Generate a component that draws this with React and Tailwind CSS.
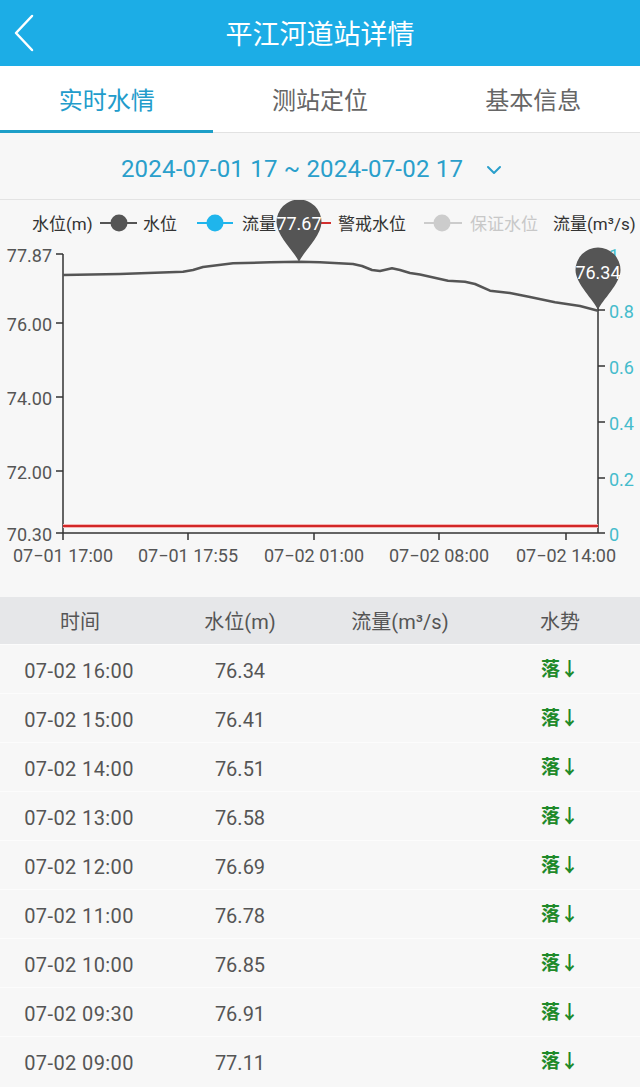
import React from "react";

const rows = [
  ["07-02 16:00", "76.34"],
  ["07-02 15:00", "76.41"],
  ["07-02 14:00", "76.51"],
  ["07-02 13:00", "76.58"],
  ["07-02 12:00", "76.69"],
  ["07-02 11:00", "76.78"],
  ["07-02 10:00", "76.85"],
  ["07-02 09:30", "76.91"],
  ["07-02 09:00", "77.11"],
];

const pts = [
  [63, 276], [120, 275], [183, 272.7], [193, 271], [203, 268], [233, 264.3], [270, 263.3],
  [299, 262.7], [320, 263.3], [353, 265], [362, 267], [372, 271], [380, 272], [392, 269.3],
  [400, 271], [410, 274], [420, 275.5], [448, 281.7], [465, 282.7], [475, 285], [490, 291.7],
  [510, 294], [530, 298], [555, 303.3], [580, 307], [598, 311.7],
];

function pinPath(x, y) {
  const r = 22.5;
  return `M${x},${y} C${x - 4},${y - 10} ${x - r},${y - 26} ${x - r},${y - 40} A${r},${r} 0 1 1 ${x + r},${y - 40} C${x + r},${y - 26} ${x + 4},${y - 10} ${x},${y} Z`;
}

function Chart() {
  const font = "Roboto, 'Noto Sans CJK SC', sans-serif";
  const line = pts.map((p, i) => `${i ? "L" : "M"}${p[0]},${p[1]}`).join(" ");
  const leftTicks = [[255, "77.87"], [324, "76.00"], [398, "74.00"], [472, "72.00"], [534, "70.30"]];
  const rightTicks = [[255, "1"], [311, "0.8"], [367, "0.6"], [423, "0.4"], [479, "0.2"], [534, "0"]];
  const xTicks = [[63, "07−01 17:00"], [188, "07−01 17:55"], [314, "07−02 01:00"], [439, "07−02 08:00"], [566, "07−02 14:00"]];
  return (
    <svg width="640" height="397" viewBox="0 201 640 397" className="block" style={{ fontFamily: font }}>
      {/* legend */}
      <g fontSize="17" dominantBaseline="central">
        <text x="32" y="225" fill="#333">水位(m)</text>
        <line x1="100" y1="224" x2="137" y2="224" stroke="#555" strokeWidth="2" />
        <circle cx="119" cy="224" r="8.5" fill="#555" />
        <text x="143" y="225" fill="#333">水位</text>
        <line x1="197" y1="224" x2="233" y2="224" stroke="#1fb5ec" strokeWidth="2" />
        <circle cx="215" cy="224" r="8.5" fill="#1fb5ec" />
        <text x="242" y="225" fill="#333">流量</text>
        <line x1="300" y1="224" x2="331" y2="224" stroke="#d32f2f" strokeWidth="2" />
        <text x="338" y="225" fill="#333">警戒水位</text>
        <line x1="424" y1="224" x2="462" y2="224" stroke="#cccccc" strokeWidth="2" />
        <circle cx="442" cy="224" r="8.5" fill="#cccccc" />
        <text x="470" y="225" fill="#c8c8c8">保证水位</text>
        <text x="553" y="225" fill="#333">流量(m³/s)</text>
      </g>
      {/* axes */}
      <line x1="63" y1="255" x2="63" y2="534" stroke="#333" strokeWidth="1.5" />
      <line x1="598" y1="255" x2="598" y2="534" stroke="#333" strokeWidth="1.5" />
      <line x1="63" y1="534" x2="598" y2="534" stroke="#333" strokeWidth="1.5" />
      <g fontSize="18" dominantBaseline="central">
        {leftTicks.map(([y, t]) => (
          <g key={t}>
            <line x1="56" y1={y} x2="63" y2={y} stroke="#333" strokeWidth="1.5" />
            <text x="52" y={y + 1} textAnchor="end" fill="#555">{t}</text>
          </g>
        ))}
        {rightTicks.map(([y, t]) => (
          <g key={t}>
            <line x1="598" y1={y} x2="605" y2={y} stroke="#333" strokeWidth="1.5" />
            <text x="609" y={y + 1} fill="#45bccc">{t}</text>
          </g>
        ))}
        {xTicks.map(([x, t]) => (
          <g key={t}>
            <line x1={x} y1="534" x2={x} y2="541" stroke="#333" strokeWidth="1.5" />
            <text x={x} y="556" textAnchor="middle" fill="#555">{t}</text>
          </g>
        ))}
      </g>
      {/* warning line */}
      <line x1="63" y1="527" x2="598" y2="527" stroke="#f5b5b5" strokeWidth="4" />
      <line x1="63" y1="527" x2="598" y2="527" stroke="#d32727" strokeWidth="2" />
      {/* data line */}
      <path d={line} fill="none" stroke="#555" strokeWidth="2.5" strokeLinejoin="round" />
      {/* pins */}
      <path d={pinPath(299, 263)} fill="#555" />
      <text x="299" y="224" textAnchor="middle" dominantBaseline="central" fontSize="18" fill="#fff">77.67</text>
      <path d={pinPath(598, 311)} fill="#555" />
      <text x="598" y="273" textAnchor="middle" dominantBaseline="central" fontSize="18" fill="#fff">76.34</text>
    </svg>
  );
}

export default function App() {
  return (
    <div className="w-[640px] h-[1087px] overflow-hidden bg-[#f7f7f7] font-['Roboto','Noto_Sans_CJK_SC',sans-serif]">
      {/* header */}
      <div className="h-[66px] bg-[#1cade6] flex items-center">
        <div className="w-[60px] flex items-center pl-[12px]">
          <svg width="24" height="40" viewBox="0 0 24 40">
            <polyline points="20,3 4,20 20,37" fill="none" stroke="#fff" strokeWidth="2.5" strokeLinecap="round" strokeLinejoin="round" />
          </svg>
        </div>
        <div className="flex-1 text-center text-white text-[27px] pt-[4px]">平江河道站详情</div>
        <div className="w-[60px]" />
      </div>
      {/* tabs */}
      <div className="h-[67px] bg-white grid grid-cols-3 border-b border-[#e2e2e2]">
        <div className="flex items-center justify-center pt-[6px] text-[24px] text-[#229ccb] border-b-[3px] border-[#1e9fc8] -mb-px">实时水情</div>
        <div className="flex items-center justify-center pt-[4px] text-[24px] text-[#666]">测站定位</div>
        <div className="flex items-center justify-center pt-[4px] text-[24px] text-[#666]">基本信息</div>
      </div>
      {/* date */}
      <div className="h-[67px] flex items-center justify-center gap-[18px] pt-[5px] pr-[16px] border-b border-[#e3e3e3]">
        <span className="text-[24px] text-[#2a9fcb] tracking-[0.2px]">2024-07-01 17 ~ 2024-07-02 17</span>
        <svg width="18" height="12" viewBox="0 0 18 12" className="mt-[2px] ml-[4px]">
          <polyline points="3,3 9,9 15,3" fill="none" stroke="#2a9fcb" strokeWidth="2" strokeLinecap="round" strokeLinejoin="round" />
        </svg>
      </div>
      <Chart />
      {/* table */}
      <div className="h-[47px] bg-[#e6e7e9] grid grid-cols-4 text-[20px] text-[#555] pt-[3px]">
        <div className="flex items-center justify-center">时间</div>
        <div className="flex items-center justify-center">水位(m)</div>
        <div className="flex items-center justify-center">流量(m³/s)</div>
        <div className="flex items-center justify-center">水势</div>
      </div>
      {rows.map(([t, v]) => (
        <div key={t} className="h-[49px] grid grid-cols-4 text-[20px] text-[#555] pt-[3px] border-t border-[#fcfcfc] first:border-t-0">
          <div className="flex items-center justify-center tracking-[0.4px] pr-[2px]">{t}</div>
          <div className="flex items-center justify-center">{v}</div>
          <div />
          <div className="flex items-center justify-center text-[19px] text-[#1f8a2a] font-bold">落↓</div>
        </div>
      ))}
    </div>
  );
}
